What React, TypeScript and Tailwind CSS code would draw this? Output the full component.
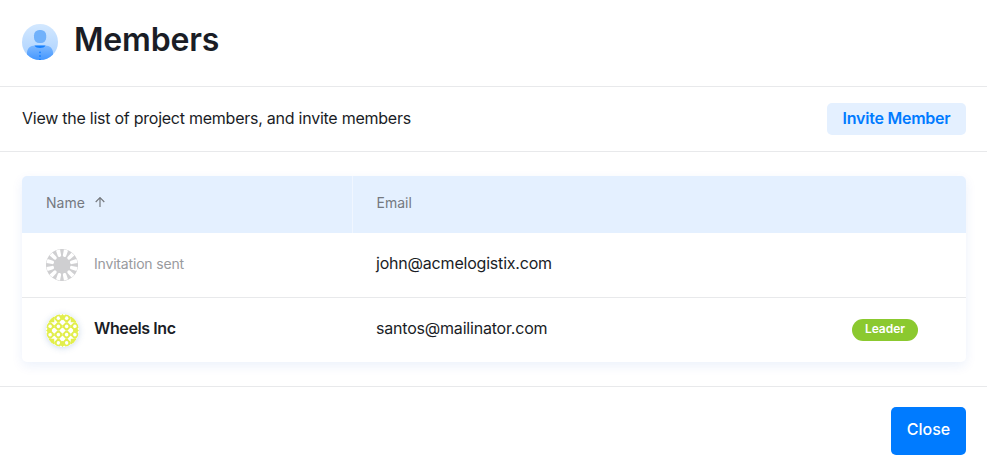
import React from 'react';

function MembersIcon() {
  return (
    <svg width="36" height="36" viewBox="0 0 36 36" className="shrink-0">
      <defs>
        <linearGradient id="disc" x1="0" y1="0" x2="0" y2="1">
          <stop offset="0" stopColor="#d3e8ff" />
          <stop offset="1" stopColor="#aad1ff" />
        </linearGradient>
        <linearGradient id="body" x1="0" y1="0" x2="0" y2="1">
          <stop offset="0" stopColor="#7db8ff" />
          <stop offset="1" stopColor="#4497ff" />
        </linearGradient>
        <clipPath id="disc-clip"><circle cx="18" cy="18" r="18" /></clipPath>
      </defs>
      <g clipPath="url(#disc-clip)">
        <rect width="36" height="36" fill="url(#disc)" />
        <rect x="12" y="6" width="12.2" height="13" rx="5.2" fill="#70b1fb" />
        <path d="M5 36v-7c0-4.500 3-7.500 8-7.500h10c5 0 8 3 8 7.500v7z" fill="url(#body)" />
        <path d="M12.500 21.500h11c-1 1.800-3 2.500-5.500 2.500s-4.500-.7-5.500-2.500z" fill="#1681ff" />
        <g fill="#1681ff">
          <circle cx="18" cy="28.300" r=".9" />
          <circle cx="18" cy="32" r=".9" />
          <circle cx="18" cy="35.700" r=".9" />
        </g>
      </g>
    </svg>
  );
}

function PendingAvatar() {
  return (
    <svg width="32" height="32" viewBox="0 0 32 32" className="shrink-0">
      <circle cx="16" cy="16" r="16" fill="#cfcfd1" />
      {Array.from({ length: 12 }, (_, i) => (
        <path key={i} d="M14.300 6.200 13.900.6Q16 .1 18.100.6L17.700 6.200a1.700 1.500 0 0 1-3.400 0z" fill="#fff" transform={`rotate(${i * 30 + 15} 16 16)`} />
      ))}
    </svg>
  );
}

function WheelsAvatar() {
  const steps = [0, 8, 16, 24];
  const isCorner = (x: number, y: number) => (x === 0 || x === 24) && (y === 0 || y === 24);
  return (
    <svg width="33" height="33" viewBox="0 0 32 32" className="mr-[-0.5px] -ml-[0.5px] shrink-0 rounded-full shadow-[0_1px_6px_rgba(60,110,180,0.25)]">
      <defs><clipPath id="wheel-clip"><circle cx="16" cy="16" r="16" /></clipPath></defs>
      <g clipPath="url(#wheel-clip)">
        <rect width="32" height="32" fill="#fff" />
        {steps.flatMap((x) => steps.filter((y) => !isCorner(x, y)).map((y) => (
          <g key={`${x}-${y}`} transform={`translate(${x} ${y})`}>
            <path d="M3.100 0h1.800L8 3.100v1.800L4.900 8H3.100L0 4.900V3.100z" fill="#e2ee4c" />
            <circle cx="4" cy="4" r="1.700" fill="#fff" />
          </g>
        )))}
        <path d="M8 0v8H0zM24 0v8h8zM8 32v-8H0zM24 32v-8h8zM16 0l3 3-3 3-3-3zM16 26l3 3-3 3-3-3zM0 16l3-3 3 3-3 3zM26 16l3-3 3 3-3 3z" fill="#e2ee4c" />
      </g>
    </svg>
  );
}

export default function App() {
  return (
    <main className="h-[472px] w-full bg-white font-['Inter',sans-serif] text-[#1a1d26]">
      <header className="flex h-[87px] items-center gap-4 border-b border-[#e8e9eb] px-[22px] pb-[3px]">
        <MembersIcon />
        <h1 className="pb-[3px] text-[32px] leading-10 font-semibold tracking-[-0.2px]">Members</h1>
      </header>
      <section className="flex h-[65px] items-center justify-between border-b border-[#e8e9eb] pr-[21px] pl-[22px]">
        <p className="pb-0.5 text-[16px] tracking-[-0.25px]">View the list of project members, and invite members</p>
        <button className="h-8 w-[139px] rounded-[5px] bg-[#e4f0ff] pb-0.5 text-[16px] font-semibold tracking-[-0.23px] text-[#007bff]">Invite Member</button>
      </section>
      <section className="h-[235px] border-b border-[#e8e9eb] pt-6 pr-[21px] pl-[22px]">
        <div className="h-[186px] overflow-hidden rounded-[5px] shadow-[0_4px_12px_rgba(0,80,200,0.08)]">
          <div className="flex h-[57px] bg-[#e4f0ff] text-[14px] text-[#75797f]">
            <div className="flex w-[331px] items-center gap-[9px] border-r border-[#f0f6ff] pb-[5px] pl-6">
              <span>Name</span>
              <svg width="12" height="12" viewBox="0 0 12 12" fill="none" stroke="#75797f" strokeWidth="1.200"><path d="M6 11V2M1.700 6 6 1.700 10.300 6" /></svg>
            </div>
            <div className="flex items-center pb-[5px] pl-[23.500px]">Email</div>
          </div>
          <div className="flex h-[65px] items-center border-b border-[#e8e9eb] pl-6">
            <PendingAvatar />
            <span className="w-[298px] shrink-0 pb-[3px] pl-4 text-[14px] tracking-[-0.18px] text-[#999a9e]">Invitation sent</span>
            <span className="pb-[5px] text-[16px] tracking-[-0.2px]">john@acmelogistix.com</span>
          </div>
          <div className="flex h-16 items-center pr-12 pl-6">
            <WheelsAvatar />
            <span className="w-[298px] shrink-0 pb-[5px] pl-4 text-[16px] font-semibold tracking-[-0.4px]">Wheels Inc</span>
            <span className="pb-[5px] text-[16px] tracking-[-0.2px]">santos@mailinator.com</span>
            <span className="ml-auto flex h-[22px] w-[66px] justify-center rounded-full bg-[#8bc92f] text-[12px] leading-5 font-semibold text-white">Leader</span>
          </div>
        </div>
      </section>
      <footer className="flex justify-end pt-5 pr-[21px]">
        <button className="h-12 w-[75px] rounded-[5px] bg-[#007bff] pb-[5px] text-[16px] font-medium text-white">Close</button>
      </footer>
    </main>
  );
}
